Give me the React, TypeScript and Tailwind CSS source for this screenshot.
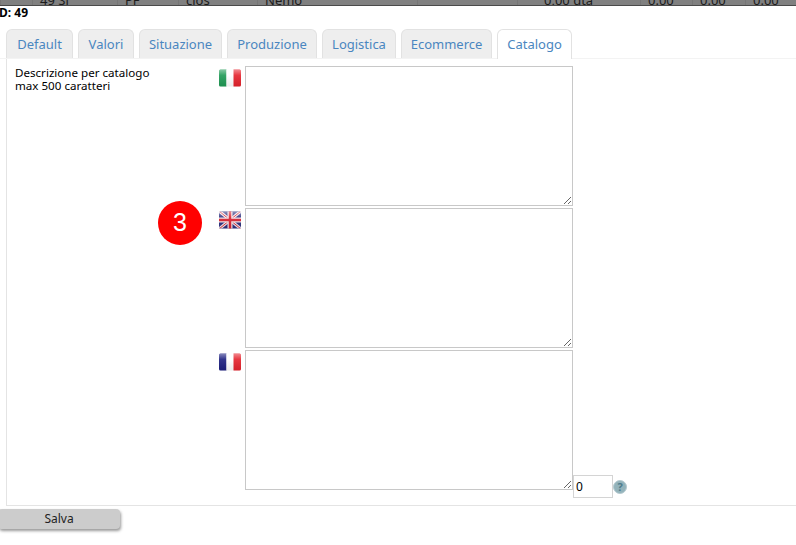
import React from "react";

const topCells = [
  { w: "w-[32px] pl-[7px]", text: "" },
  { w: "w-[85px] pl-[7px]", text: "49 Si" },
  { w: "w-[61px] pl-[7px]", text: "PF" },
  { w: "w-[79px] pl-[7px]", text: "cios" },
  { w: "w-[160px] pl-[7px]", text: "Nemo" },
  { w: "w-[100px] pl-[7px]", text: "" },
  { w: "w-[123px] pl-[26px]", text: "0,00 dta" },
  { w: "w-[52px] pl-[7px]", text: "0.00" },
  { w: "w-[53px] pl-[7px]", text: "0.00" },
  { w: "w-[51px] pl-[7px]", text: "0.00" },
];

const tabs = [
  { label: "Default", w: "w-[67px]" },
  { label: "Valori", w: "w-[56px]" },
  { label: "Situazione", w: "w-[83px]" },
  { label: "Produzione", w: "w-[90px]" },
  { label: "Logistica", w: "w-[74px]" },
  { label: "Ecommerce", w: "w-[91px]" },
];

const font = "font-['Noto_Sans',sans-serif]";

// Glossy shading shared by the three flags
function Flag({ id, children }: { id: string; children: React.ReactNode }) {
  return (
    <svg width="24" height="18" viewBox="0 0 24 18" className="block">
      <defs>
        <linearGradient id={id} x1="0" y1="0" x2="0" y2="1">
          <stop offset="0" stopColor="#fff" stopOpacity="0.5" />
          <stop offset="0.35" stopColor="#fff" stopOpacity="0.1" />
          <stop offset="1" stopColor="#000" stopOpacity="0.08" />
        </linearGradient>
        <clipPath id={id + "c"}>
          <rect x="1" y="0.5" width="22" height="17" rx="1.5" />
        </clipPath>
      </defs>
      <g clipPath={`url(#${id}c)`}>
        {children}
        <rect x="1" y="0" width="22" height="18" fill={`url(#${id})`} />
      </g>
    </svg>
  );
}

const flagIt = (
  <Flag id="it">
    <rect x="1" y="0" width="7.5" height="18" fill="#1f9a55" />
    <rect x="8.5" y="0" width="7" height="18" fill="#ffffff" />
    <rect x="15.5" y="0" width="7.5" height="18" fill="#e5222c" />
  </Flag>
);

const flagUk = (
  <Flag id="uk">
    <rect x="1" y="0" width="22" height="18" fill="#2b2f7f" />
    <path d="M1 0 L23 18 M23 0 L1 18" stroke="#f4e6ea" strokeWidth="3" />
    <path d="M1 0 L23 18 M23 0 L1 18" stroke="#d5303f" strokeWidth="1" />
    <path d="M12 0 V18 M1 9 H23" stroke="#f4e6ea" strokeWidth="5" />
    <path d="M12 0 V18 M1 9 H23" stroke="#d9202f" strokeWidth="2.5" />
  </Flag>
);

const flagFr = (
  <Flag id="fr">
    <rect x="1" y="0" width="7.5" height="18" fill="#1c1f80" />
    <rect x="8.5" y="0" width="7" height="18" fill="#ffffff" />
    <rect x="15.5" y="0" width="7.5" height="18" fill="#e5222c" />
  </Flag>
);

function Area() {
  return <textarea className="block w-[328px] h-[140px] border border-[#c8c8c8] bg-white resize outline-none" />;
}

export default function App() {
  return (
    <div className={`relative w-[796px] h-[545px] overflow-hidden bg-white text-[12px] text-black ${font}`}>
      {/* Row of the table behind the dialog, cut by the top edge */}
      <div className="flex h-[6px] overflow-hidden bg-[#808080] border-b border-[#4a4a4a]">
        {topCells.map((c, i) => (
          <div key={i} className={`${c.w} shrink-0 h-[20px] -mt-[10px] border-l border-[#767676] text-[13px] leading-[20px] text-[#1c1c1c] whitespace-nowrap`}>
            {c.text}
          </div>
        ))}
      </div>

      <div className="h-[15px] -ml-px -mt-[1px] text-[12px] leading-[15px] font-bold">D: 49</div>

      {/* Tabs */}
      <div className="flex gap-[5px] mt-[9px] pl-[6px] h-[30px] border-b border-[#f3f3f3]">
        {tabs.map((t) => (
          <div key={t.label} className={`${t.w} h-[29px] pt-px flex items-center justify-center rounded-t-[6px] border border-b-0 border-[#e2e2e2] bg-[#eeeeee] text-[13px] text-[#4a86c0]`}>
            {t.label}
          </div>
        ))}
        <div className="w-[75px] h-[30px] flex items-center justify-center rounded-t-[6px] border border-b-0 border-[#e2e2e2] bg-white text-[13px] text-[#4a86c0]">
          Catalogo
        </div>
      </div>

      {/* Panel */}
      <div className="ml-[6px] h-[447px] pt-[7px] border-l border-b border-[#e4e4e4] flex flex-col gap-[2px]">
        <div className="flex">
          <div className="w-[212px] pl-2 text-[11.6px] leading-[13px]">
            Descrizione per catalogo
            <br />
            max 500 caratteri
          </div>
          <div className="w-[26px] pt-[3px] -ml-px mr-px">{flagIt}</div>
          <Area />
        </div>
        <div className="flex">
          <div className="w-[212px]" />
          <div className="w-[26px] pt-[3px] -ml-px mr-px">{flagUk}</div>
          <Area />
        </div>
        <div className="flex">
          <div className="w-[212px]" />
          <div className="w-[26px] pt-[3px] -ml-px mr-px">{flagFr}</div>
          <Area />
          <div className="self-end flex items-center -mb-2">
            <input
              readOnly
              value="0"
              className="w-[40px] h-[23px] pl-[2px] border border-[#d4d4d4] bg-white text-[12px] text-black outline-none"
            />
            <div className="w-[14px] h-[14px] ml-[0px] rounded-full bg-[#93b3bb] border border-[#b5cad0] flex items-center justify-center text-[11px] leading-none font-bold text-[#4f7c8c]">
              ?
            </div>
          </div>
        </div>
      </div>

      {/* Save */}
      <button className="block -ml-[2px] mt-[3px] w-[122px] h-[20px] rounded-[4px] bg-[#cccccc] shadow-[1px_2px_3px_#999999] text-[12px] leading-[18px] text-[#222]">
        Salva
      </button>

      {/* Step marker laid over the form */}
      <div className="absolute left-[158px] top-[201px] w-[44px] h-[44px] rounded-full bg-[#ff0000] flex items-center justify-center font-['Liberation_Sans',sans-serif] text-[25px] text-white">
        3
      </div>
    </div>
  );
}
